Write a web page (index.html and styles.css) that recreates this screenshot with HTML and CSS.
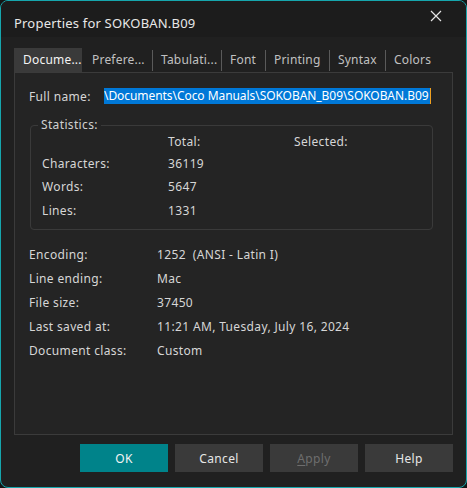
FILE: index.html
```html
<!DOCTYPE html>
<html lang="en">
<head>
<meta charset="utf-8">
<title>Properties for SOKOBAN.B09</title>
<link rel="stylesheet" href="styles.css">
</head>
<body>
<div class="window">
  <div class="titlebar">
    <span class="title">Properties for SOKOBAN.B09</span>
    <span class="close" aria-label="Close">
      <svg width="12" height="12" viewBox="0 0 12 12"><path d="M1 1 L11 11 M11 1 L1 11" stroke="#e4e4e4" stroke-width="1.2" fill="none"/></svg>
    </span>
  </div>
  <div class="content">
    <div class="tabs">
      <div class="tab active t-doc">Docume...</div>
      <div class="tab t-pref">Prefere...</div>
      <span class="sep"></span>
      <div class="tab t-tab">Tabulati...</div>
      <span class="sep"></span>
      <div class="tab t-font">Font</div>
      <span class="sep"></span>
      <div class="tab t-print">Printing</div>
      <span class="sep"></span>
      <div class="tab t-syn">Syntax</div>
      <span class="sep"></span>
      <div class="tab t-col">Colors</div>
    </div>
    <div class="panel">
      <div class="fullname">
        <span class="label">Full name:</span>
        <span class="field"><span class="sel">\Documents\Coco Manuals\SOKOBAN_B09\SOKOBAN.B09</span><span class="caret"></span></span>
      </div>
      <fieldset class="group">
        <legend>Statistics:</legend>
        <div class="stats">
          <span class="head"></span><span class="head">Total:</span><span class="head">Selected:</span>
          <span>Characters:</span><span>36119</span><span></span>
          <span>Words:</span><span>5647</span><span></span>
          <span>Lines:</span><span>1331</span><span></span>
        </div>
      </fieldset>
      <div class="info">
        <span>Encoding:</span><span>1252&nbsp; (ANSI - Latin I)</span>
        <span>Line ending:</span><span>Mac</span>
        <span>File size:</span><span>37450</span>
        <span>Last saved at:</span><span>11:21 AM, Tuesday, July 16, 2024</span>
        <span>Document class:</span><span>Custom</span>
      </div>
    </div>
    <div class="buttons">
      <button class="btn primary">OK</button>
      <button class="btn">Cancel</button>
      <button class="btn disabled"><u>A</u>pply</button>
      <button class="btn">Help</button>
    </div>
  </div>
</div>
</body>
</html>
```
FILE: styles.css
```css
html, body {
  margin: 0;
  padding: 0;
  background: #151515;
}
body {
  font-family: "Noto Sans", "Open Sans", sans-serif;
  font-size: 12px;
  letter-spacing: 0.35px;
  color: #d6d6d6;
}
.window {
  width: 467px;
  height: 488px;
  box-sizing: border-box;
  border: 1px solid #16a6ad;
  border-radius: 8px;
  background: #202020;
  display: flex;
  flex-direction: column;
  overflow: hidden;
}
.titlebar {
  height: 36px;
  flex: none;
  background: #1c1c1c;
  display: flex;
  align-items: flex-start;
  justify-content: space-between;
  padding: 14px 0 0 13px;
  box-sizing: border-box;
}
.title {
  font-size: 13px;
  letter-spacing: 0.2px;
  line-height: 16px;
  color: #e8e8e8;
}
.close {
  display: flex;
  width: 12px;
  height: 12px;
  margin: -5px 24px 0 0;
}
.content {
  flex: 1;
  display: flex;
  flex-direction: column;
  padding: 11px 13px 0 13px;
}
.tabs {
  display: flex;
  align-items: center;
  height: 24px;
}
.tab {
  flex: none;
  box-sizing: border-box;
  height: 24px;
  line-height: 24px;
  padding-left: 8px;
  color: #c0c0c0;
  letter-spacing: 0.2px;
  white-space: nowrap;
  overflow: hidden;
}
.tab.active {
  background: #3a3a3a;
  color: #f4f4f4;
  position: relative;
  z-index: 1;
  padding-left: 9px;
}
.t-doc { width: 68px; }
.t-pref { width: 70px; padding-left: 10px; }
.t-tab { width: 68px; }
.t-font { width: 43px; }
.t-print { width: 63px; }
.t-syn { width: 55px; }
.t-col { width: 55px; }
.sep {
  flex: none;
  width: 1px;
  height: 21px;
  margin-top: 1px;
  background: #5a5a5a;
}
.panel {
  height: 363px;
  box-sizing: border-box;
  border: 1px solid #3b3b3b;
  background: #242424;
  padding: 11px 19px 0 14px;
  display: flex;
  flex-direction: column;
}
.fullname {
  display: flex;
  align-items: center;
  height: 24px;
}
.fullname .label {
  width: 75px;
  flex: none;
}
.field {
  display: flex;
  align-items: center;
  white-space: nowrap;
  overflow: hidden;
  letter-spacing: -0.06px;
}
.sel {
  background: #0078d7;
  color: #ffffff;
  line-height: 16px;
  height: 16px;
  padding: 0 1px 0 0;
}
.caret {
  width: 1px;
  height: 16px;
  background: #f0a020;
}
.group {
  margin: 9px 0 0 1px;
  padding: 0 0 8px 0;
  border: 1px solid #3a3a3a;
  border-radius: 4px;
}
.group legend {
  margin-left: 7px;
  padding: 0 3px;
  line-height: 16px;
  color: #d0d0d0;
}
.stats {
  display: grid;
  grid-template-columns: 126px 126px 1fr;
  grid-template-rows: 16px;
  grid-auto-rows: 24px;
  padding-left: 11px;
  align-items: center;
}
.stats > span:nth-child(4),
.stats > span:nth-child(5) {
  margin-top: 4px;
}
.stats > span:nth-child(n+7) {
  margin-top: 3px;
}
.info {
  display: grid;
  grid-template-columns: 128px 1fr;
  grid-auto-rows: 24px;
  align-items: center;
  margin-top: 12px;
}
.buttons {
  display: flex;
  justify-content: flex-end;
  gap: 7px;
  margin-top: 9px;
}
.btn {
  width: 88px;
  height: 28px;
  border: none;
  background: #3a3a3a;
  color: #e6e6e6;
  font-family: "Noto Sans", "Open Sans", sans-serif;
  font-size: 12px;
  letter-spacing: 0.35px;
  padding: 0;
}
.btn.primary {
  background: #00838a;
  color: #f4f4f4;
}
.btn.disabled {
  color: #6e6e6e;
}
.btn u {
  text-decoration: underline;
  text-underline-offset: 2px;
}
```
